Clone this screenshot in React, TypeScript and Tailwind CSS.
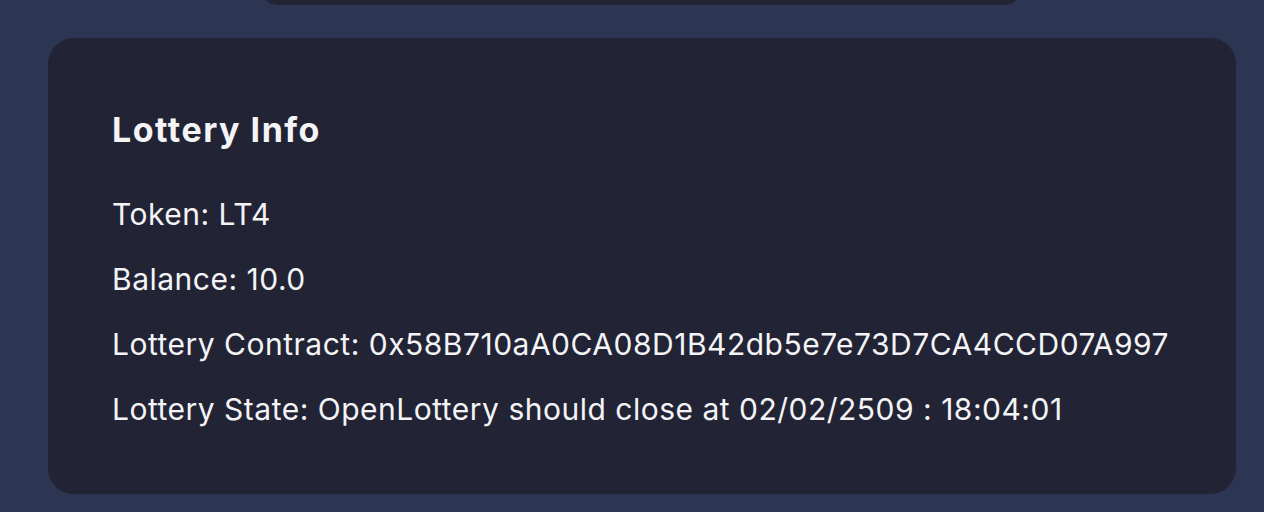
export default function App() {
  const rows = [
    'Token: LT4',
    'Balance: 10.0',
    'Lottery Contract: 0x58B710aA0CA08D1B42db5e7e73D7CA4CCD07A997',
    'Lottery State: OpenLottery should close at 02/02/2509 : 18:04:01',
  ];

  return (
    <div className="min-h-screen bg-[#2c3652] font-['Inter',sans-serif] text-[#f4f4f6] overflow-hidden">
      {/* previous card, scrolled mostly out of view */}
      <div className="ml-[262px] w-[758px] h-[30px] -mt-[25px] rounded-[28px] bg-[#222436]" />

      {/* Lottery info card */}
      <div className="mt-[33px] ml-12 w-[1188px] rounded-[26px] bg-[#222436] pt-[74px] pb-[65px] pl-16">
        <h2 className="text-[34px] leading-9 font-bold tracking-[1.5px]">Lottery Info</h2>
        <div className="mt-[47px] flex flex-col gap-[26px] text-[30px] leading-[39px] tracking-[0.5px]">
          {rows.map((r) => (
            <p key={r}>{r}</p>
          ))}
        </div>
      </div>
    </div>
  );
}
